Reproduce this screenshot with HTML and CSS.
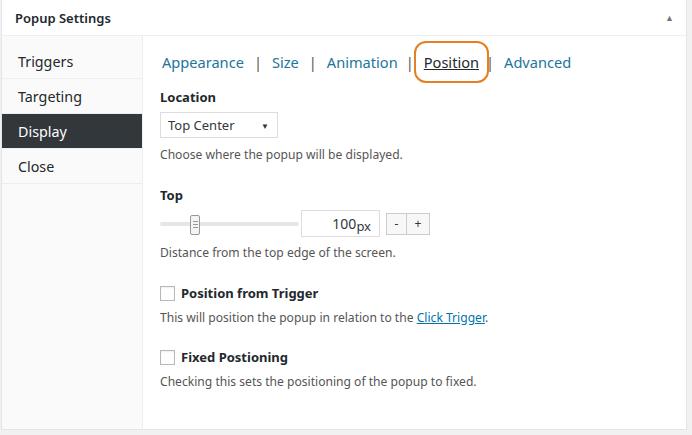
FILE: index.html
```html
<!DOCTYPE html>
<html>
<head>
<meta charset="utf-8">
<link rel="stylesheet" href="styles.css">
</head>
<body>
<div class="box">
  <div class="box-head">
    <h2 class="box-title">Popup Settings</h2>
    <span class="toggle">&#9650;</span>
  </div>
  <div class="box-body">
    <ul class="side">
      <li class="side-item">Triggers</li>
      <li class="side-item">Targeting</li>
      <li class="side-item active">Display</li>
      <li class="side-item">Close</li>
    </ul>
    <div class="main">
      <div class="tabs">
        <a class="tab">Appearance</a><span class="sep">|</span>
        <a class="tab">Size</a><span class="sep">|</span>
        <a class="tab">Animation</a><span class="sep sep-tight">|</span>
        <a class="tab current">Position</a><span class="sep sep-tight">|</span>
        <a class="tab">Advanced</a>
      </div>

      <div class="field">
        <div class="label">Location</div>
        <div class="select"><span>Top Center</span><span class="caret">&#9660;</span></div>
        <p class="desc">Choose where the popup will be displayed.</p>
      </div>

      <div class="field">
        <div class="label">Top</div>
        <div class="range-row">
          <div class="slider"><div class="track"></div><div class="handle"><span></span><span></span><span></span></div></div>
          <div class="num">100<span class="unit">px</span></div>
          <div class="btns"><span class="btn">-</span><span class="btn">+</span></div>
        </div>
        <p class="desc range-desc">Distance from the top edge of the screen.</p>
      </div>

      <div class="field check-field">
        <div class="check-row"><span class="checkbox"></span><span class="label">Position from Trigger</span></div>
        <p class="desc">This will position the popup in relation to the <a class="link">Click Trigger</a>.</p>
      </div>

      <div class="field check-field last">
        <div class="check-row"><span class="checkbox"></span><span class="label">Fixed Postioning</span></div>
        <p class="desc">Checking this sets the positioning of the popup to fixed.</p>
      </div>
    </div>
  </div>
</div>
</body>
</html>
```

FILE: styles.css
```css
html, body {
  margin: 0;
  padding: 0;
  background: #f1f1f1;
  font-family: "Noto Sans", "Open Sans", sans-serif;
  color: #444;
}
.box {
  margin: 0 5px 0 1px;
  height: 430px;
  box-sizing: border-box;
  background: #fff;
  border: 1px solid #e5e5e5;
  border-top: none;
  display: flex;
  flex-direction: column;
}
.box-head {
  height: 36px;
  box-sizing: border-box;
  border-bottom: 1px solid #eee;
  display: flex;
  align-items: center;
  justify-content: space-between;
  padding: 0 12px 0 13px;
}
.box-title {
  margin: 0;
  font-size: 13px;
  font-weight: 600;
  color: #23282d;
}
.toggle {
  font-size: 9px;
  color: #72777c;
}
.box-body {
  flex: 1;
  display: flex;
}
.side {
  list-style: none;
  margin: 0;
  padding: 8px 0 0 0;
  width: 140px;
  background: #fafafa;
  border-right: 1px solid #eee;
}
.side-item {
  height: 35px;
  box-sizing: border-box;
  border-bottom: 1px solid #eee;
  padding: 0 0 0 16px;
  display: flex;
  align-items: center;
  font-size: 14.3px;
  color: #23282d;
}
.side-item.active {
  background: #32373c;
  color: #fff;
}
.main {
  flex: 1;
  padding: 6px 0 0 17px;
}
.tabs {
  display: flex;
  align-items: center;
  height: 40px;
  font-size: 14.6px;
  margin-left: 2px;
}
.tab {
  color: #21759b;
}
.sep {
  color: #555;
  margin: 0 10px;
}
.sep-tight {
  margin: 0 8px;
}
.tab.current {
  color: #23282d;
  text-decoration: underline;
  outline: 2px solid #e67e22;
  border-radius: 10px;
  padding: 9px 8px;
  margin: 0 -9px 0 -6px;
}
.tab.current + .sep {
  margin: 0 10px 0 8px;
}
.label {
  font-size: 13px;
  font-weight: 700;
  color: #23282d;
}
.field > .label {
  margin-top: 6px;
}
.select {
  margin-top: 6px;
  width: 118px;
  height: 26px;
  box-sizing: border-box;
  border: 1px solid #ddd;
  display: flex;
  align-items: center;
  justify-content: space-between;
  padding: 0 8px 0 7px;
  font-size: 13px;
  color: #32373c;
}
.caret {
  font-size: 8px;
  color: #333;
}
.desc {
  margin: 8px 0 0;
  font-size: 12.1px;
  color: #555;
}
.desc.range-desc {
  margin-top: 7px;
}
.field + .field {
  margin-top: 23px;
}
.range-row {
  display: flex;
  align-items: center;
  margin-top: 6px;
}
.slider {
  width: 139px;
  height: 24px;
  position: relative;
  display: flex;
  align-items: center;
}
.track {
  width: 100%;
  height: 4px;
  background: #e6e6e6;
  border-radius: 2px;
}
.handle {
  position: absolute;
  left: 30px;
  top: 3px;
  width: 8px;
  height: 18px;
  background: #f4f4f4;
  border: 1px solid #999;
  border-radius: 2px;
  display: flex;
  flex-direction: column;
  justify-content: center;
  align-items: center;
  gap: 2px;
}
.handle span {
  width: 5px;
  height: 1px;
  background: #999;
}
.num {
  margin-left: 2px;
  width: 79px;
  height: 27px;
  box-sizing: border-box;
  border: 1px solid #ddd;
  display: flex;
  align-items: center;
  justify-content: flex-end;
  padding-right: 8px;
  font-size: 14px;
  color: #32373c;
}
.unit {
  font-size: 13px;
  margin-top: 4px;
}
.btns {
  display: flex;
  margin-left: 6px;
}
.btn {
  width: 21px;
  height: 22px;
  box-sizing: border-box;
  border: 1px solid #ccc;
  background: #f7f7f7;
  display: flex;
  align-items: center;
  justify-content: center;
  font-size: 12px;
  color: #333;
}
.btn + .btn {
  border-left: none;
  width: 23px;
}
.field.check-field {
  margin-top: 23px;
}
.field.check-field.last {
  margin-top: 22px;
}
.check-field .desc {
  margin-top: 7px;
}
.check-row {
  display: flex;
  align-items: center;
  gap: 6px;
}
.checkbox {
  width: 13px;
  height: 13px;
  border: 1px solid #b4b9be;
  background: #fff;
  box-shadow: inset 0 1px 2px rgba(0,0,0,.07);
}
.link {
  color: #0073aa;
  text-decoration: underline;
}
```
